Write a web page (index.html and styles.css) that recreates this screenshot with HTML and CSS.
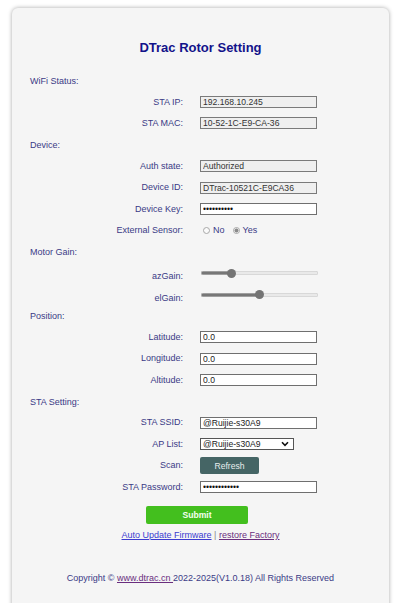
FILE: index.html
```html
<!DOCTYPE html>
<html>
<head>
<meta charset="utf-8">
<title>DTrac Rotor Setting</title>
<link rel="stylesheet" href="styles.css">
</head>
<body>
<div class="card">
  <h1 class="title">DTrac Rotor Setting</h1>
  <form class="form">
    <div class="row head">WiFi Status:</div>
    <div class="row"><label class="lbl">STA IP:</label><input class="field" type="text" value="192.168.10.245" disabled></div>
    <div class="row"><label class="lbl">STA MAC:</label><input class="field" type="text" value="10-52-1C-E9-CA-36" disabled></div>

    <div class="row head">Device:</div>
    <div class="row"><label class="lbl">Auth state:</label><input class="field" type="text" value="Authorized" disabled></div>
    <div class="row"><label class="lbl">Device ID:</label><input class="field" type="text" value="DTrac-10521C-E9CA36" disabled></div>
    <div class="row"><label class="lbl">Device Key:</label><input class="field" type="password" value="1234567890"></div>
    <div class="row"><label class="lbl">External Sensor:</label>
      <div class="radios">
        <input class="radio" type="radio" name="ext" disabled><span class="rtext">No</span>
        <input class="radio" type="radio" name="ext" checked disabled><span class="rtext">Yes</span>
      </div>
    </div>

    <div class="row head">Motor Gain:</div>
    <div class="row"><label class="lbl lbl-low">azGain:</label><input class="slider" type="range" min="0" max="100" value="24" style="--p:24%"></div>
    <div class="row"><label class="lbl lbl-low">elGain:</label><input class="slider" type="range" min="0" max="100" value="50" style="--p:50%"></div>

    <div class="row head">Position:</div>
    <div class="row"><label class="lbl">Latitude:</label><input class="field" type="text" value="0.0"></div>
    <div class="row"><label class="lbl">Longitude:</label><input class="field" type="text" value="0.0"></div>
    <div class="row"><label class="lbl">Altitude:</label><input class="field" type="text" value="0.0"></div>

    <div class="row head">STA Setting:</div>
    <div class="row"><label class="lbl">STA SSID:</label><input class="field" type="text" value="@Ruijie-s30A9"></div>
    <div class="row"><label class="lbl">AP List:</label>
      <div class="selwrap">
        <select class="sel"><option>@Ruijie-s30A9</option></select>
        <svg class="chev" width="8" height="6" viewBox="0 0 8 6"><path d="M1 1.3 L4 4.3 L7 1.3" fill="none" stroke="#111" stroke-width="1.6"/></svg>
      </div>
    </div>
    <div class="row"><label class="lbl">Scan:</label><button class="btn-refresh" type="button">Refresh</button></div>
    <div class="row"><label class="lbl">STA Password:</label><input class="field" type="password" value="123456789012"></div>

    <div class="actions"><button class="btn-submit" type="button">Submit</button></div>
    <div class="links"><a class="link-new" href="#">Auto Update Firmware</a> <span class="sep">|</span> <a class="link-visited" href="#">restore Factory</a></div>
  </form>
  <p class="copy">Copyright © <a class="link-visited" href="#">www.dtrac.cn </a>2022-2025(V1.0.18) All Rights Reserved</p>
</div>
</body>
</html>
```

FILE: styles.css
```css
html, body {
  margin: 0;
  padding: 0;
  background: #ffffff;
}
body {
  font-family: "Liberation Sans", Arial, sans-serif;
  font-size: 9px;
  color: #3a3a86;
  padding: 8px 11px 0 12px;
}
.card {
  background: #f5f5f5;
  border-radius: 6px;
  box-shadow: 0 0 4px rgba(0, 0, 0, 0.35);
  padding: 32px 18px 40px;
  min-height: 640px;
  box-sizing: border-box;
}
.title {
  margin: 0 0 14px;
  font-size: 13px;
  line-height: 16px;
  font-weight: bold;
  color: #12128a;
  text-align: center;
}
.form {
  margin: 0;
}
.row {
  display: flex;
  align-items: center;
  height: 21.4px;
}
.lbl {
  width: 153px;
  flex: none;
  text-align: right;
  margin-right: 17px;
  line-height: 11px;
}
.lbl-low {
  padding-top: 7px;
}
.field {
  box-sizing: border-box;
  width: 117px;
  height: 12px;
  margin: 0;
  padding: 0 2px;
  border: 1px solid #6f6f6f;
  border-radius: 0;
  background: #ffffff;
  font-family: "Liberation Sans", Arial, sans-serif;
  font-size: 8.6px;
  color: #222;
  line-height: 10px;
}
.field:disabled {
  background: #efefef;
  border-color: #7a7a7a;
  color: #333;
}
.field[type="password"] {
  font-size: 8.6px;
  letter-spacing: 0;
  color: #111;
}
.radios {
  display: flex;
  align-items: center;
  padding-left: 3px;
}
.radio {
  -webkit-appearance: none;
  appearance: none;
  width: 7px;
  height: 7px;
  margin: 0 3px 0 0;
  border: 1px solid #a8a8a8;
  border-radius: 50%;
  background: #fafafa;
  box-sizing: border-box;
}
.radio:checked {
  background: radial-gradient(circle, #8a8a8a 0 1.8px, #f2f2f2 2.2px);
}
.rtext {
  margin-right: 8px;
}
.slider {
  -webkit-appearance: none;
  appearance: none;
  width: 117px;
  height: 4px;
  margin: 0 0 0 1px;
  border-radius: 2px;
  background: linear-gradient(to right, #777 0, #777 var(--p), #e9e9e9 var(--p), #e9e9e9 100%);
  box-shadow: inset 0 0 0 0.5px #c8c8c8;
  outline: none;
}
.slider::-webkit-slider-thumb {
  -webkit-appearance: none;
  appearance: none;
  width: 9px;
  height: 9px;
  border-radius: 50%;
  background: #747474;
  border: none;
}
.selwrap {
  position: relative;
  width: 94px;
  height: 12px;
}
.sel {
  -webkit-appearance: none;
  appearance: none;
  box-sizing: border-box;
  width: 94px;
  height: 12px;
  margin: 0;
  padding: 0 2px;
  border: 1px solid #555;
  border-radius: 0;
  background: #ffffff;
  font-family: "Liberation Sans", Arial, sans-serif;
  font-size: 8.6px;
  line-height: 10px;
  color: #222;
}
.chev {
  position: absolute;
  right: 5px;
  top: 3px;
  pointer-events: none;
}
.btn-refresh {
  width: 59px;
  height: 17px;
  margin: 0;
  padding: 0;
  border: none;
  border-radius: 2px;
  background: #456565;
  color: #e8eeee;
  font-family: "Liberation Sans", Arial, sans-serif;
  font-size: 8.6px;
}
.actions {
  display: flex;
  justify-content: center;
  margin-top: 8px;
}
.btn-submit {
  width: 102px;
  height: 18px;
  margin: 0 0 0 -7px;
  padding: 0;
  border: none;
  border-radius: 2px;
  background: #43bf1e;
  color: #f4fff0;
  font-family: "Liberation Sans", Arial, sans-serif;
  font-size: 8.6px;
  font-weight: bold;
}
.links {
  text-align: center;
  margin-top: 5px;
  line-height: 12px;
}
.link-new {
  color: #3b3bd0;
}
.link-visited {
  color: #6a2e7e;
}
.sep {
  color: #888;
}
.copy {
  text-align: center;
  margin: 31px 0 0;
  line-height: 12px;
}
```
